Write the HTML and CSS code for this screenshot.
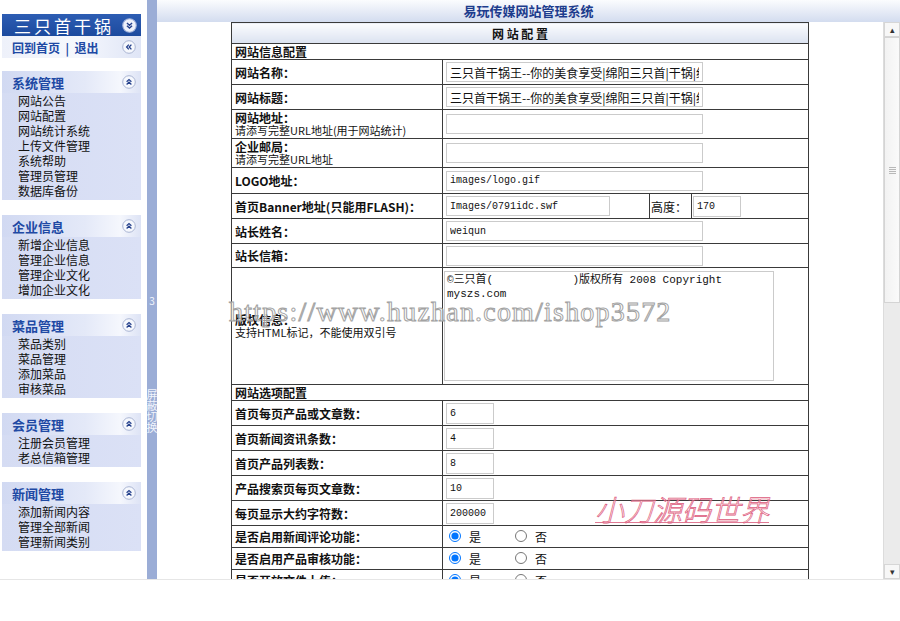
FILE: index.html
```html
<!DOCTYPE html>
<html lang="zh-CN">
<head>
    <meta charset="UTF-8">
    <title>易玩传媒网站管理系统</title>
    <link rel="stylesheet" href="styles.css">
</head>
<body>
    <svg class="defs" width="0" height="0">
        <symbol id="i-up" viewBox="0 0 14 14">
            <circle cx="7" cy="7" r="6.3" fill="#f6f8fd" stroke="#aab5d3" />
            <path d="M4.6 6.8 7 4.6 9.4 6.8M4.6 9.4 7 7.2 9.4 9.4" fill="none" stroke="#24408c" stroke-width="1.3" />
        </symbol>
        <symbol id="i-down" viewBox="0 0 14 14">
            <circle cx="7" cy="7" r="6.3" fill="#eef2fb" stroke="#9fb0da" />
            <path d="M4.6 4.6 7 6.8 9.4 4.6M4.6 7.2 7 9.4 9.4 7.2" fill="none" stroke="#24408c" stroke-width="1.3" />
        </symbol>
        <symbol id="i-left" viewBox="0 0 14 14">
            <circle cx="7" cy="7" r="6.3" fill="#f6f8fd" stroke="#aab5d3" />
            <path d="M6.8 4.6 4.6 7 6.8 9.4M9.4 4.6 7.2 7 9.4 9.4" fill="none" stroke="#24408c" stroke-width="1.3" />
        </symbol>
    </svg>

    <div class="frame">
        <div class="side">
            <div class="logo"><span>三只首干锅</span><svg class="ico"><use href="#i-down" /></svg></div>
            <div class="quick"><span>回到首页 &nbsp;|&nbsp; 退出</span><svg class="ico"><use href="#i-left" /></svg></div>

            <div class="menu first">
                <div class="menu-head"><span>系统管理</span><svg class="ico"><use href="#i-up" /></svg></div>
                <ul class="menu-list">
                    <li>网站公告</li>
                    <li>网站配置</li>
                    <li>网站统计系统</li>
                    <li>上传文件管理</li>
                    <li>系统帮助</li>
                    <li>管理员管理</li>
                    <li>数据库备份</li>
                </ul>
            </div>
            <div class="menu">
                <div class="menu-head"><span>企业信息</span><svg class="ico"><use href="#i-up" /></svg></div>
                <ul class="menu-list">
                    <li>新增企业信息</li>
                    <li>管理企业信息</li>
                    <li>管理企业文化</li>
                    <li>增加企业文化</li>
                </ul>
            </div>
            <div class="menu">
                <div class="menu-head"><span>菜品管理</span><svg class="ico"><use href="#i-up" /></svg></div>
                <ul class="menu-list">
                    <li>菜品类别</li>
                    <li>菜品管理</li>
                    <li>添加菜品</li>
                    <li>审核菜品</li>
                </ul>
            </div>
            <div class="menu">
                <div class="menu-head"><span>会员管理</span><svg class="ico"><use href="#i-up" /></svg></div>
                <ul class="menu-list">
                    <li>注册会员管理</li>
                    <li>老总信箱管理</li>
                </ul>
            </div>
            <div class="menu">
                <div class="menu-head"><span>新闻管理</span><svg class="ico"><use href="#i-up" /></svg></div>
                <ul class="menu-list">
                    <li>添加新闻内容</li>
                    <li>管理全部新闻</li>
                    <li>管理新闻类别</li>
                </ul>
            </div>
        </div>

        <div class="switch">
            <span>3</span>
            <span class="vtext">屏蔽切换</span>
        </div>

        <div class="main">
            <div class="topbar">易玩传媒网站管理系统</div>
            <div class="body-row">
                <div class="view">
                    <table class="conf">
                        <colgroup>
                            <col class="c1">
                            <col class="c2">
                            <col class="c3">
                            <col class="c4">
                        </colgroup>
                        <tr class="head">
                            <td colspan="4">网 站 配 置</td>
                        </tr>
                        <tr class="sect">
                            <th colspan="4">网站信息配置</th>
                        </tr>
                        <tr class="r25">
                            <th>网站名称：</th>
                            <td colspan="3"><input class="txt" type="text" value="三只首干锅王--你的美食享受|绵阳三只首|干锅|绵阳火锅"></td>
                        </tr>
                        <tr class="r25">
                            <th>网站标题：</th>
                            <td colspan="3"><input class="txt" type="text" value="三只首干锅王--你的美食享受|绵阳三只首|干锅|绵阳火锅"></td>
                        </tr>
                        <tr class="r28">
                            <th>网站地址：<span class="sub">请添写完整URL地址(用于网站统计)</span></th>
                            <td colspan="3"><input class="txt" type="text" value=""></td>
                        </tr>
                        <tr class="r28">
                            <th>企业邮局：<span class="sub">请添写完整URL地址</span></th>
                            <td colspan="3"><input class="txt" type="text" value=""></td>
                        </tr>
                        <tr class="r26">
                            <th>LOGO地址：</th>
                            <td colspan="3"><input class="txt mono" type="text" value="images/logo.gif"></td>
                        </tr>
                        <tr class="r25">
                            <th>首页Banner地址(只能用FLASH)：</th>
                            <td><input class="txt mono mid" type="text" value="Images/0791idc.swf"></td>
                            <td class="plain">高度：</td>
                            <td class="tight"><input class="txt mono num" type="text" value="170"></td>
                        </tr>
                        <tr class="r25">
                            <th>站长姓名：</th>
                            <td colspan="3"><input class="txt mono" type="text" value="weiqun"></td>
                        </tr>
                        <tr class="r24">
                            <th>站长信箱：</th>
                            <td colspan="3"><input class="txt" type="text" value=""></td>
                        </tr>
                        <tr class="r117">
                            <th>版权信息：<span class="sub">支持HTML标记，不能使用双引号</span></th>
                            <td colspan="3" class="tight"><textarea class="area">©三只首(            )版权所有 2008 Copyright
myszs.com</textarea></td>
                        </tr>
                        <tr class="sect">
                            <th colspan="4">网站选项配置</th>
                        </tr>
                        <tr class="r25">
                            <th>首页每页产品或文章数：</th>
                            <td colspan="3"><input class="txt mono num" type="text" value="6"></td>
                        </tr>
                        <tr class="r25">
                            <th>首页新闻资讯条数：</th>
                            <td colspan="3"><input class="txt mono num" type="text" value="4"></td>
                        </tr>
                        <tr class="r25">
                            <th>首页产品列表数：</th>
                            <td colspan="3"><input class="txt mono num" type="text" value="8"></td>
                        </tr>
                        <tr class="r25">
                            <th>产品搜索页每页文章数：</th>
                            <td colspan="3"><input class="txt mono num" type="text" value="10"></td>
                        </tr>
                        <tr class="r25">
                            <th>每页显示大约字符数：</th>
                            <td colspan="3"><input class="txt mono num" type="text" value="200000"></td>
                        </tr>
                        <tr class="r22">
                            <th>是否启用新闻评论功能：</th>
                            <td colspan="3"><label class="opt"><input type="radio" name="pl" checked>是</label><label class="opt"><input type="radio" name="pl">否</label></td>
                        </tr>
                        <tr class="r22">
                            <th>是否启用产品审核功能：</th>
                            <td colspan="3"><label class="opt"><input type="radio" name="sh" checked>是</label><label class="opt"><input type="radio" name="sh">否</label></td>
                        </tr>
                        <tr class="r22">
                            <th>是否开放文件上传：</th>
                            <td colspan="3"><label class="opt"><input type="radio" name="up" checked>是</label><label class="opt"><input type="radio" name="up">否</label></td>
                        </tr>
                    </table>
                </div>
                <div class="vscroll">
                    <div class="sb-btn">&#9652;</div>
                    <div class="sb-thumb"><span class="grip"></span></div>
                    <div class="sb-track"></div>
                    <div class="sb-btn">&#9662;</div>
                </div>
            </div>
        </div>
    </div>

    <div class="wm-url">https://www.huzhan.com/ishop3572</div>
    <div class="wm-cn">小刀源码世界</div>
</body>
</html>
```

FILE: styles.css
```css
* {
    box-sizing: border-box;
}

body {
    margin: 0;
    background: #fff;
    color: #111;
    font-family: "Noto Sans CJK SC", "Liberation Sans", sans-serif;
    font-size: 12px;
    position: relative;
}

.defs {
    position: absolute;
    width: 0;
    height: 0;
}

.frame {
    display: flex;
    height: 580px;
    border-bottom: 1px solid #e6e6e6;
}

/* left menu */
.side {
    width: 147px;
    padding: 14px 6px 0 2px;
    background: #fff;
}

.ico {
    width: 14px;
    height: 14px;
    margin-right: 5px;
    flex: none;
}

.logo {
    height: 22px;
    display: flex;
    align-items: center;
    padding-left: 12px;
    background: linear-gradient(#2d5db3, #1c4a9e);
    color: #fff;
    font-size: 17px;
    letter-spacing: 3px;
    white-space: nowrap;
}

.logo span,
.quick span,
.menu-head span {
    flex: 1;
}

.logo .ico {
    width: 15px;
    height: 15px;
    margin-right: 4px;
}

.quick {
    height: 22px;
    display: flex;
    align-items: center;
    padding-left: 10px;
    background: linear-gradient(to right, #eef1fa, #f6f8fd 55%, #dfe5f6);
    color: #2049a4;
    font-weight: bold;
}

.menu {
    margin-top: 15px;
}

.menu.first {
    margin-top: 13px;
}

.menu-head {
    height: 22px;
    display: flex;
    align-items: center;
    padding-left: 10px;
    background: linear-gradient(to right, #d1d9f2, #e4e9f8 60%, #f5f7fd 85%, #dde3f5);
    color: #2049a4;
    font-size: 13px;
    font-weight: bold;
}

.menu-list {
    list-style: none;
    margin: 0;
    padding: 0 0 2px 16px;
    background: linear-gradient(to right, #d5dcf3, #dbe1f6);
    line-height: 15px;
    color: #111;
}

/* switch bar */
.switch {
    width: 10px;
    display: flex;
    flex-direction: column;
    align-items: center;
    padding-top: 295px;
    background: #9badd6;
    color: #f2f5fc;
    font-size: 10px;
    line-height: 12px;
}

.vtext {
    writing-mode: vertical-rl;
    margin-top: 82px;
    font-size: 11px;
    line-height: 10px;
}

/* main area */
.main {
    flex: 1;
    display: flex;
    flex-direction: column;
    min-width: 0;
}

.topbar {
    height: 22px;
    background: linear-gradient(#fbfcfe, #d3dcef);
    color: #1d3c8d;
    font-size: 13px;
    font-weight: bold;
    line-height: 22px;
    text-align: center;
}

.body-row {
    flex: 1;
    display: flex;
    min-height: 0;
}

.view {
    flex: 1;
    overflow: hidden;
}

.conf {
    width: 577px;
    margin: 0 auto;
    border-collapse: collapse;
    table-layout: fixed;
}

.c1 {
    width: 211px;
}

.c2 {
    width: 207px;
}

.c3 {
    width: 42px;
}

.c4 {
    width: 117px;
}

.conf td,
.conf th {
    border: 1px solid #3a3a3a;
    padding: 0 3px;
    vertical-align: middle;
    text-align: left;
    line-height: 13px;
}

.conf th {
    font-weight: bold;
}

.conf .head td {
    height: 21px;
    background: linear-gradient(#fbfcfe, #dbe2f0);
    text-align: center;
    font-weight: bold;
}

.conf .sect th {
    height: 16px;
}

.r22 td,
.r22 th {
    height: 22px;
}

.r24 td,
.r24 th {
    height: 24px;
}

.r25 td,
.r25 th {
    height: 25px;
}

.r26 td,
.r26 th {
    height: 26px;
}

.r28 td,
.r28 th {
    height: 29px;
}

.r117 td,
.r117 th {
    height: 117px;
}

.sub {
    display: block;
    font-weight: normal;
    font-size: 11px;
}

.conf .plain {
    font-weight: normal;
    padding: 0 1px;
    white-space: nowrap;
}

.conf .tight {
    padding-left: 1px;
}

.txt {
    display: block;
    width: 257px;
    height: 20px;
    border: 1px solid #cbcbcb;
    padding: 0 3px;
    font-family: "Noto Sans CJK SC", sans-serif;
    font-size: 12px;
    color: #111;
    background: #fff;
}

.mono {
    font-family: "Liberation Mono", "Noto Sans CJK SC", monospace;
    font-size: 10px;
}

.mid {
    width: 164px;
}

.num {
    width: 48px;
    height: 21px;
}

.area {
    display: block;
    width: 330px;
    height: 110px;
    border: 1px solid #cbcbcb;
    padding: 1px 2px;
    resize: none;
    overflow-y: scroll;
    font-family: "Liberation Mono", "Noto Sans CJK SC", monospace;
    font-size: 11px;
    line-height: 14px;
    color: #111;
}

.opt {
    display: inline-flex;
    align-items: center;
    width: 66px;
}

.opt input {
    margin: 0 8px 0 3px;
    width: 12px;
    height: 12px;
}

/* fake scrollbar of the frame */
.vscroll {
    width: 17px;
    display: flex;
    flex-direction: column;
    background: #ebebeb;
    border-left: 1px solid #dcdcdc;
}

.sb-btn {
    height: 15px;
    background: #f7f7f7;
    border: 1px solid #d6d6d6;
    color: #333;
    font-size: 9px;
    line-height: 13px;
    text-align: center;
}

.sb-thumb {
    height: 266px;
    display: flex;
    align-items: center;
    justify-content: center;
    background: linear-gradient(to right, #f2f2f2, #fafafa);
    border: 1px solid #d4d4d4;
}

.grip {
    width: 7px;
    height: 7px;
    background: repeating-linear-gradient(#b8b8b8 0 1px, transparent 1px 2px);
}

.sb-track {
    flex: 1;
}

/* watermarks laid over the page */
.wm-url {
    position: absolute;
    left: 229px;
    top: 296px;
    font-family: "Liberation Serif", serif;
    font-size: 28px;
    letter-spacing: 1.2px;
    color: rgba(255, 255, 255, 0.6);
    -webkit-text-stroke: 1px #a2a2a2;
    white-space: nowrap;
    pointer-events: none;
}

.wm-cn {
    position: absolute;
    left: 595px;
    top: 487px;
    font-family: "Noto Sans CJK SC", sans-serif;
    font-size: 29px;
    font-style: italic;
    font-weight: 300;
    color: rgba(255, 220, 228, 0.4);
    -webkit-text-stroke: 0.7px #dc5a7c;
    text-decoration: underline;
    text-decoration-color: #e07a94;
    text-decoration-thickness: 1px;
    white-space: nowrap;
    pointer-events: none;
}
```
